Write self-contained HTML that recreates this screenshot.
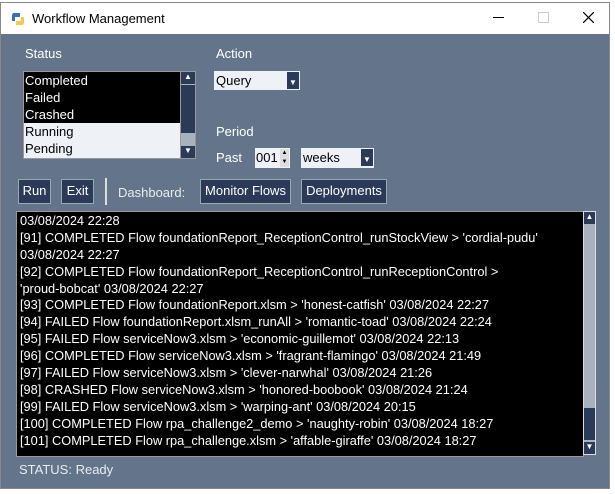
<!DOCTYPE html><html><head><style>
body{margin:0;width:615px;height:494px;background:#fff;position:relative;overflow:hidden;font-family:"Liberation Sans",Arial,sans-serif}
.win{position:absolute;left:0;top:2px;width:610px;height:487px;background:#64748a;border:1px solid #888;box-sizing:border-box}
.title{position:absolute;left:0;top:0;width:100%;height:31px;background:#fff;font-size:13px}
.c{position:absolute;left:0;top:-2px;width:100%;height:100%}
.a{position:absolute;color:#fff;font-size:13px}
.btn{position:absolute;background:#2a3a58;color:#fff;font-size:13px;border:1px solid #9aa;box-sizing:border-box;text-align:center;line-height:22px}
.list{position:absolute;left:22px;top:70px;width:156px;height:86px;background:#eef1f6;border:1px solid #999;font-size:13px}
.list div{height:17px;line-height:17px;padding-left:1px}
.log{position:absolute;left:15px;top:210px;width:566px;height:244px;background:#000;color:#fff;font-size:12.8px;border:1px solid #999}
.log div{height:16.9px;line-height:17px;padding-left:3px;white-space:nowrap}
</style></head><body>
<div class="win">
<div class="title">
<svg style="position:absolute;left:9px;top:8px" width="16" height="16"><path d="M3 2h7v4H5v4H2V4z" fill="#3a6fb0"/><path d="M13 14H6v-4h5V6h3v6z" fill="#f2c94c"/></svg>
<span style="position:absolute;left:31px;top:8px">Workflow Management</span>
<div style="position:absolute;left:492px;top:14px;width:11px;height:1px;background:#000"></div>
<div style="position:absolute;left:537px;top:9px;width:9px;height:9px;border:1px solid #ccc"></div>
<svg style="position:absolute;left:582px;top:9px" width="11" height="11"><path d="M0 0L11 11M11 0L0 11" stroke="#000" stroke-width="1.2"/></svg>
</div>
<div class="c">
<span class="a" style="left:24px;top:45px">Status</span>
<span class="a" style="left:215px;top:45px">Action</span>
<div class="list">
<div style="background:#000;color:#fff">Completed</div><div style="background:#000;color:#fff">Failed</div><div style="background:#000;color:#fff">Crashed</div><div>Running</div><div>Pending</div>
</div>
<div style="position:absolute;left:179px;top:70px;width:14px;height:86px;background:#a8b2bc;border:1px solid #999">
<div style="height:12px;background:#2a3a58;color:#fff;font-size:8px;text-align:center">▲</div>
<div style="height:48px;background:#2a3a58;margin-top:1px"></div>
<div style="position:absolute;bottom:0;width:14px;height:12px;background:#2a3a58;color:#fff;font-size:8px;text-align:center">▼</div>
</div>
<div style="position:absolute;left:213px;top:70px;width:86px;height:19px;background:#eef1f6;font-size:13px;line-height:19px;padding-left:2px;box-sizing:border-box">Query
<div style="position:absolute;right:1px;top:1px;width:12px;height:17px;background:#2a3a58;color:#fff;font-size:8px;text-align:center;line-height:22px">▼</div></div>
<span class="a" style="left:215px;top:123px">Period</span>
<span class="a" style="left:215px;top:149px">Past</span>
<div style="position:absolute;left:254px;top:147px;width:35px;height:20px;background:#eef1f6;font-size:13px;line-height:20px;box-sizing:border-box;padding-left:1px">001
<div style="position:absolute;right:1px;top:1px;width:9px;height:18px;background:#ddd;font-size:6px;line-height:9px;text-align:center">▲<br>▼</div></div>
<div style="position:absolute;left:300px;top:147px;width:73px;height:20px;background:#eef1f6;font-size:13px;line-height:20px;padding-left:2px;box-sizing:border-box">weeks
<div style="position:absolute;right:1px;top:1px;width:12px;height:17px;background:#2a3a58;color:#fff;font-size:8px;text-align:center;line-height:22px">▼</div></div>
<div class="btn" style="left:17px;top:178px;width:33px;height:25px">Run</div>
<div class="btn" style="left:60px;top:178px;width:33px;height:25px">Exit</div>
<div style="position:absolute;left:104px;top:177px;width:2px;height:27px;background:#ddd"></div>
<span class="a" style="left:117px;top:184px;color:#e8ecf0">Dashboard:</span>
<div class="btn" style="left:199px;top:178px;width:91px;height:25px">Monitor Flows</div>
<div class="btn" style="left:300px;top:178px;width:86px;height:25px">Deployments</div>
<div class="log">
<div>03/08/2024 22:28</div>
<div>[91] COMPLETED Flow foundationReport_ReceptionControl_runStockView &gt; 'cordial-pudu'</div>
<div>03/08/2024 22:27</div>
<div>[92] COMPLETED Flow foundationReport_ReceptionControl_runReceptionControl &gt;</div>
<div>'proud-bobcat' 03/08/2024 22:27</div>
<div>[93] COMPLETED Flow foundationReport.xlsm &gt; 'honest-catfish' 03/08/2024 22:27</div>
<div>[94] FAILED Flow foundationReport.xlsm_runAll &gt; 'romantic-toad' 03/08/2024 22:24</div>
<div>[95] FAILED Flow serviceNow3.xlsm &gt; 'economic-guillemot' 03/08/2024 22:13</div>
<div>[96] COMPLETED Flow serviceNow3.xlsm &gt; 'fragrant-flamingo' 03/08/2024 21:49</div>
<div>[97] FAILED Flow serviceNow3.xlsm &gt; 'clever-narwhal' 03/08/2024 21:26</div>
<div>[98] CRASHED Flow serviceNow3.xlsm &gt; 'honored-boobook' 03/08/2024 21:24</div>
<div>[99] FAILED Flow serviceNow3.xlsm &gt; 'warping-ant' 03/08/2024 20:15</div>
<div>[100] COMPLETED Flow rpa_challenge2_demo &gt; 'naughty-robin' 03/08/2024 18:27</div>
<div>[101] COMPLETED Flow rpa_challenge.xlsm &gt; 'affable-giraffe' 03/08/2024 18:27</div>
</div>
<div style="position:absolute;left:582px;top:210px;width:13px;height:244px;background:#a8b2bc;border:1px solid #ddd;box-sizing:border-box">
<div style="height:12px;background:#2a3a58;color:#fff;font-size:8px;text-align:center">▲</div>
<div style="position:absolute;top:196px;width:11px;height:32px;background:#2a3a58"></div>
<div style="position:absolute;bottom:0;width:11px;height:12px;background:#2a3a58;color:#fff;font-size:8px;text-align:center">▼</div>
</div>
<span class="a" style="left:18px;top:461px;color:#e8ecf0">STATUS: Ready</span>
</div>
</div>
</body></html>
